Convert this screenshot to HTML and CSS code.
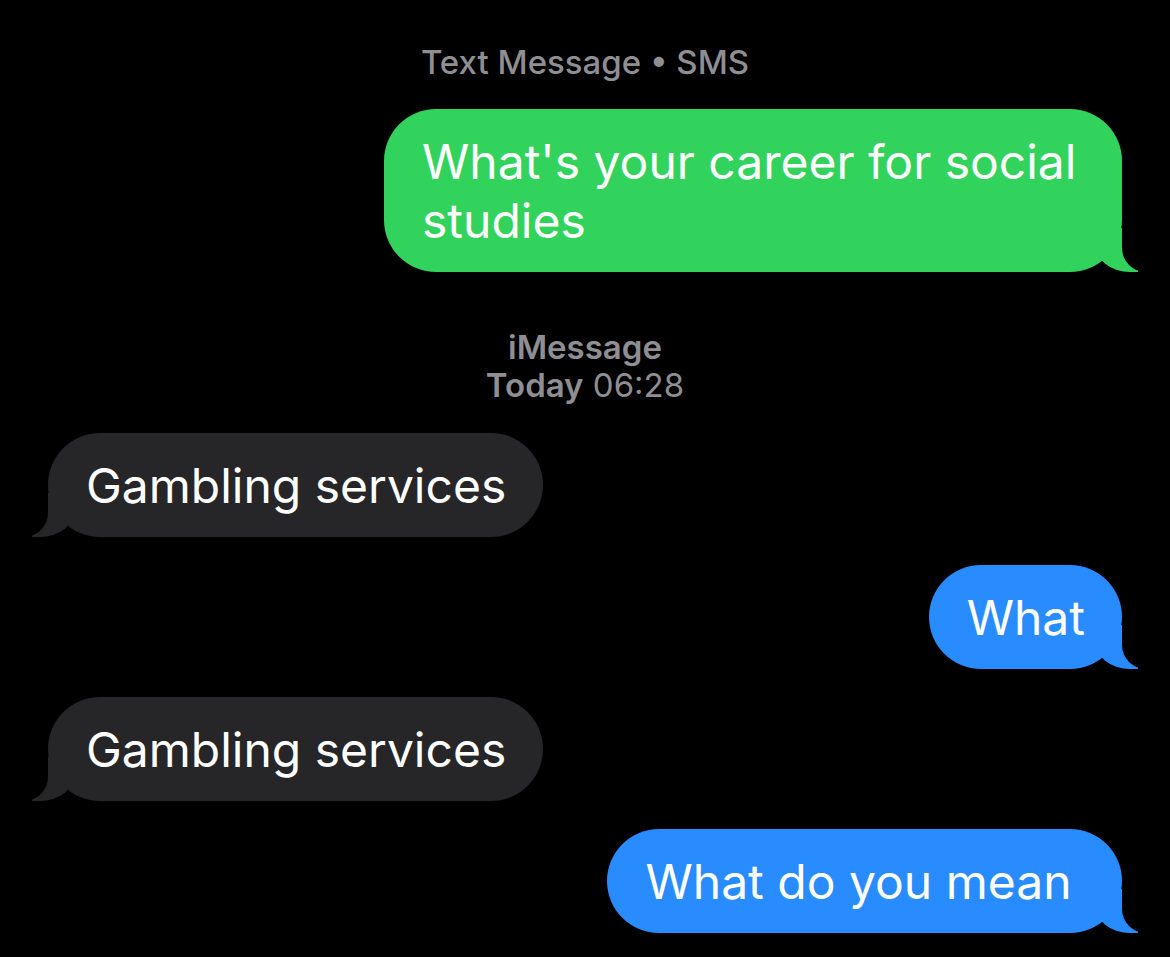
FILE: index.html
```html
<!DOCTYPE html>
<html lang="en">
<head>
    <meta charset="UTF-8">
    <meta name="viewport" content="width=device-width, initial-scale=1.0">
    <title>Messages</title>
    <link rel="stylesheet" href="styles.css">
</head>
<body>
    <div class="chat">
        <div class="service">Text Message &bull; SMS</div>

        <div class="bubble sent sms">What's your career for social studies</div>

        <div class="stamp">
            <div class="stamp-service">iMessage</div>
            <div><b>Today</b> 06:28</div>
        </div>

        <div class="bubble received">Gambling services</div>
        <div class="bubble sent">What</div>
        <div class="bubble received">Gambling services</div>
        <div class="bubble sent">What do you mean&nbsp;</div>
    </div>
</body>
</html>
```

FILE: styles.css
```css
* {
    margin: 0;
    padding: 0;
    box-sizing: border-box;
}

body {
    background-color: #000;
    color: #fff;
    font-family: Inter, "Noto Sans", sans-serif;
    width: 1170px;
    height: 957px;
    overflow: hidden;
}

.chat {
    display: flex;
    flex-direction: column;
    padding: 43px 48px 0;
}

.service {
    align-self: center;
    font-size: 33px;
    line-height: 38px;
    font-weight: 500;
    color: #8e8e93;
}

.stamp {
    align-self: center;
    text-align: center;
    margin-top: 56px;
    font-size: 33px;
    line-height: 38px;
    color: #8e8e93;
}

.stamp-service,
.stamp b {
    font-weight: 600;
}

.bubble {
    position: relative;
    max-width: 738px;
    padding: 23px 37px 22px 38px;
    border-radius: 52px;
    font-size: 48px;
    line-height: 59px;
    margin-top: 28px;
}

.stamp + .bubble {
    margin-top: 29px;
}

.sent {
    align-self: flex-end;
    background-color: #288cff;
}

.sent.sms {
    background-color: #32d35c;
}

.received {
    align-self: flex-start;
    background-color: #262629;
}

/* tail of the bubble */
.bubble::before,
.bubble::after {
    content: "";
    position: absolute;
    bottom: 0;
    height: 44px;
}

.sent::before {
    right: -16px;
    width: 44px;
    background-color: inherit;
    border-bottom-left-radius: 36px 30px;
}

.sent::after {
    right: -60px;
    width: 60px;
    background-color: #000;
    border-bottom-left-radius: 24px;
}

.received::before {
    left: -16px;
    width: 44px;
    background-color: inherit;
    border-bottom-right-radius: 36px 30px;
}

.received::after {
    left: -60px;
    width: 60px;
    background-color: #000;
    border-bottom-right-radius: 24px;
}
```
